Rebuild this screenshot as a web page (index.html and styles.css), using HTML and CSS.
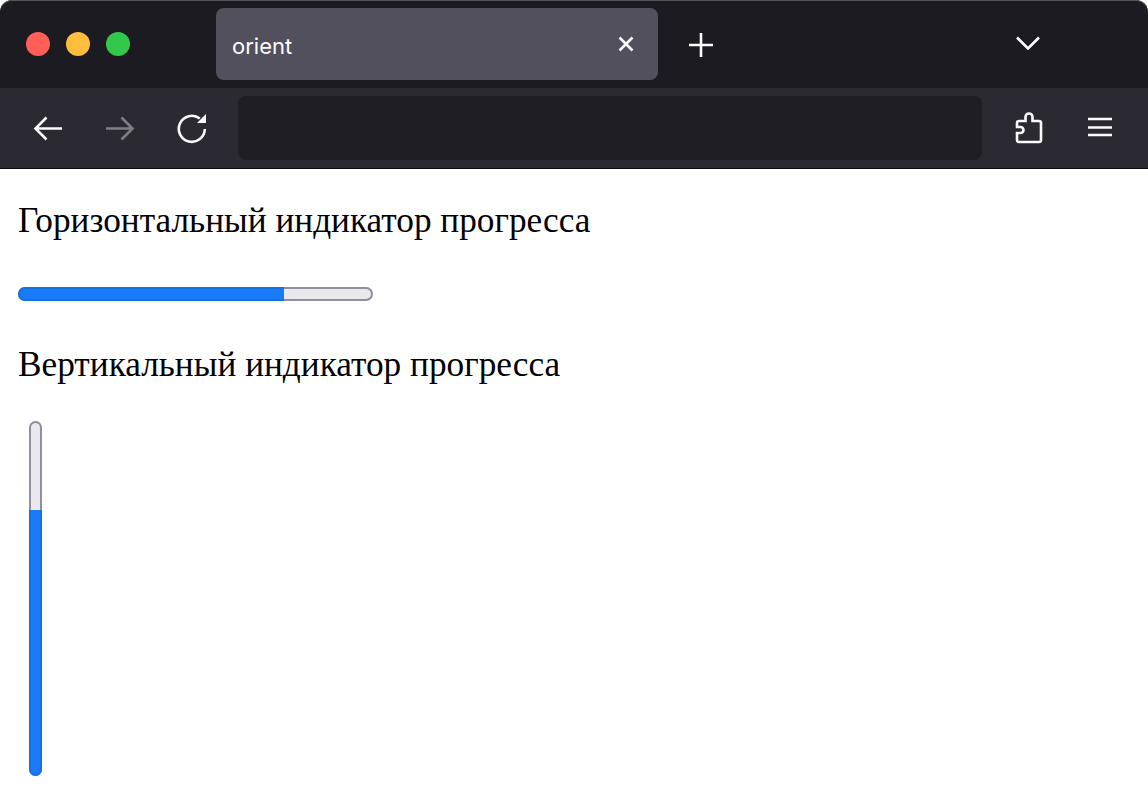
FILE: index.html
```html
<!DOCTYPE html>
<html lang="ru">
<head>
<meta charset="utf-8">
<title>orient</title>
<link rel="stylesheet" href="styles.css">
</head>
<body>
<div class="window">
  <header class="tabbar">
    <div class="lights">
      <span class="light red"></span>
      <span class="light yellow"></span>
      <span class="light green"></span>
    </div>
    <div class="tab">
      <span class="tab-title">orient</span>
      <svg class="tab-close" width="16" height="16" viewBox="0 0 16 16"><path d="M1.500 1.500l13 13M14.500 1.500l-13 13"/></svg>
    </div>
    <svg class="new-tab" width="24" height="24" viewBox="0 0 24 24"><path d="M0 12h24M12 0v24"/></svg>
    <svg class="tab-list" width="26" height="14" viewBox="0 0 26 14"><path d="M2 1.500L13 12.500 24 1.500"/></svg>
  </header>
  <nav class="navbar">
    <div class="nav-btn"><svg class="icon" width="32" height="32" viewBox="0 0 32 32"><path d="M30 16.500H4M14.500 5.500l-11 11 11 11"/></svg></div>
    <div class="nav-btn dim"><svg class="icon" width="32" height="32" viewBox="0 0 32 32"><path d="M2 16.500h26M17.500 5.500l11 11-11 11"/></svg></div>
    <div class="nav-btn"><svg class="icon" width="32" height="32" viewBox="0 0 32 32"><path d="M28.800 17a13 13 0 1 1-5-10.400"/><path class="solid" d="M21 11L30 2v9z"/></svg></div>
    <div class="urlbar"></div>
    <div class="nav-btn puzzle"><svg class="icon" width="32" height="32" viewBox="0 0 32 32"><path d="M6 30h20a2 2 0 0 0 2-2V11a2 2 0 0 0-2-2h-6.500V5a3.500 3.500 0 0 0-7 0v4H6a2 2 0 0 0-2 2v4h3.500a3 3 0 0 1 0 6H4v7a2 2 0 0 0 2 2z"/></svg></div>
    <div class="nav-btn last"><svg class="icon" width="32" height="32" viewBox="0 0 32 32"><path d="M4 7h24M4 15.500h24M4 23h24"/></svg></div>
  </nav>
  <main class="page">
    <p class="label">Горизонтальный индикатор прогресса</p>
    <div class="progress horizontal"><div class="fill" style="width:75%"></div></div>
    <p class="label">Вертикальный индикатор прогресса</p>
    <div class="progress vertical"><div class="fill" style="height:75%"></div></div>
  </main>
</div>
</body>
</html>
```
FILE: styles.css
```css
html, body {
  margin: 0;
  padding: 0;
  background: #fff;
}

.window {
  height: 802px;
  overflow: hidden;
  display: flex;
  flex-direction: column;
  font-family: "Liberation Serif", serif;
}

.tabbar {
  height: 88px;
  flex: none;
  display: flex;
  align-items: center;
  background: #1c1b22;
  box-shadow: inset 0 1px 0 #55545a;
  border-radius: 12px 12px 0 0;
  color: #fbfbfe;
}

.lights {
  display: flex;
  gap: 16px;
  margin-left: 26px;
  width: 190px;
}

.light {
  width: 24px;
  height: 24px;
  border-radius: 50%;
}

.red { background: #ff5f57; }
.yellow { background: #ffbd3e; }
.green { background: #32c84a; }

.tab {
  width: 442px;
  height: 72px;
  box-sizing: border-box;
  display: flex;
  align-items: center;
  justify-content: space-between;
  padding: 0 24px 0 16px;
  background: #52505c;
  border-radius: 8px;
}

.tab-title {
  font: 22px "Inter", "Liberation Sans", sans-serif;
  padding-top: 3px;
}

.tab-close path,
.new-tab path,
.tab-list path,
.icon path {
  fill: none;
  stroke: #fbfbfe;
  stroke-width: 2.6;
}

.new-tab {
  margin: 2px 0 0 31px;
}

.tab-list {
  margin: 0 0 2px 302px;
}

.navbar {
  height: 81px;
  flex: none;
  box-sizing: border-box;
  display: flex;
  align-items: center;
  padding: 0 0 1px 28px;
  background: #2b2a33;
  border-bottom: 1px solid #0c0c0d;
}

.nav-btn {
  flex: none;
  width: 40px;
  height: 32px;
  display: flex;
  justify-content: center;
  margin-right: 32px;
}

.nav-btn.dim {
  opacity: 0.4;
}

.nav-btn.puzzle {
  margin-right: 31px;
}

.nav-btn.last {
  margin-right: 0;
}

.icon .solid {
  fill: #fbfbfe;
  stroke: none;
}

.urlbar {
  flex: none;
  width: 744px;
  height: 64px;
  margin: 0 27px 0 -6px;
  background: #1f1e24;
  border-radius: 8px;
}

.page {
  padding: 33px 18px 0;
}

.label {
  margin: 0;
  font-size: 35.27px;
  line-height: 37px;
  color: #000;
}

.progress {
  box-sizing: border-box;
  display: flex;
  background: #e9e9ed;
  box-shadow: inset 0 0 0 2px #8f8f9d;
  border-radius: 7px;
}

.horizontal {
  width: 355px;
  height: 14px;
  margin: 48px 0 45px;
}

.vertical {
  width: 13px;
  height: 355px;
  margin: 38px 0 0 11px;
  flex-direction: column;
  justify-content: flex-end;
}

.fill {
  flex: none;
  box-sizing: border-box;
  background: #1a7bf9;
  border: 2px solid #1570e0;
}

.horizontal .fill {
  height: 14px;
  border-right: 0;
  border-radius: 7px 0 0 7px;
}

.vertical .fill {
  width: 13px;
  border-top: 0;
  border-radius: 0 0 7px 7px;
}
```
